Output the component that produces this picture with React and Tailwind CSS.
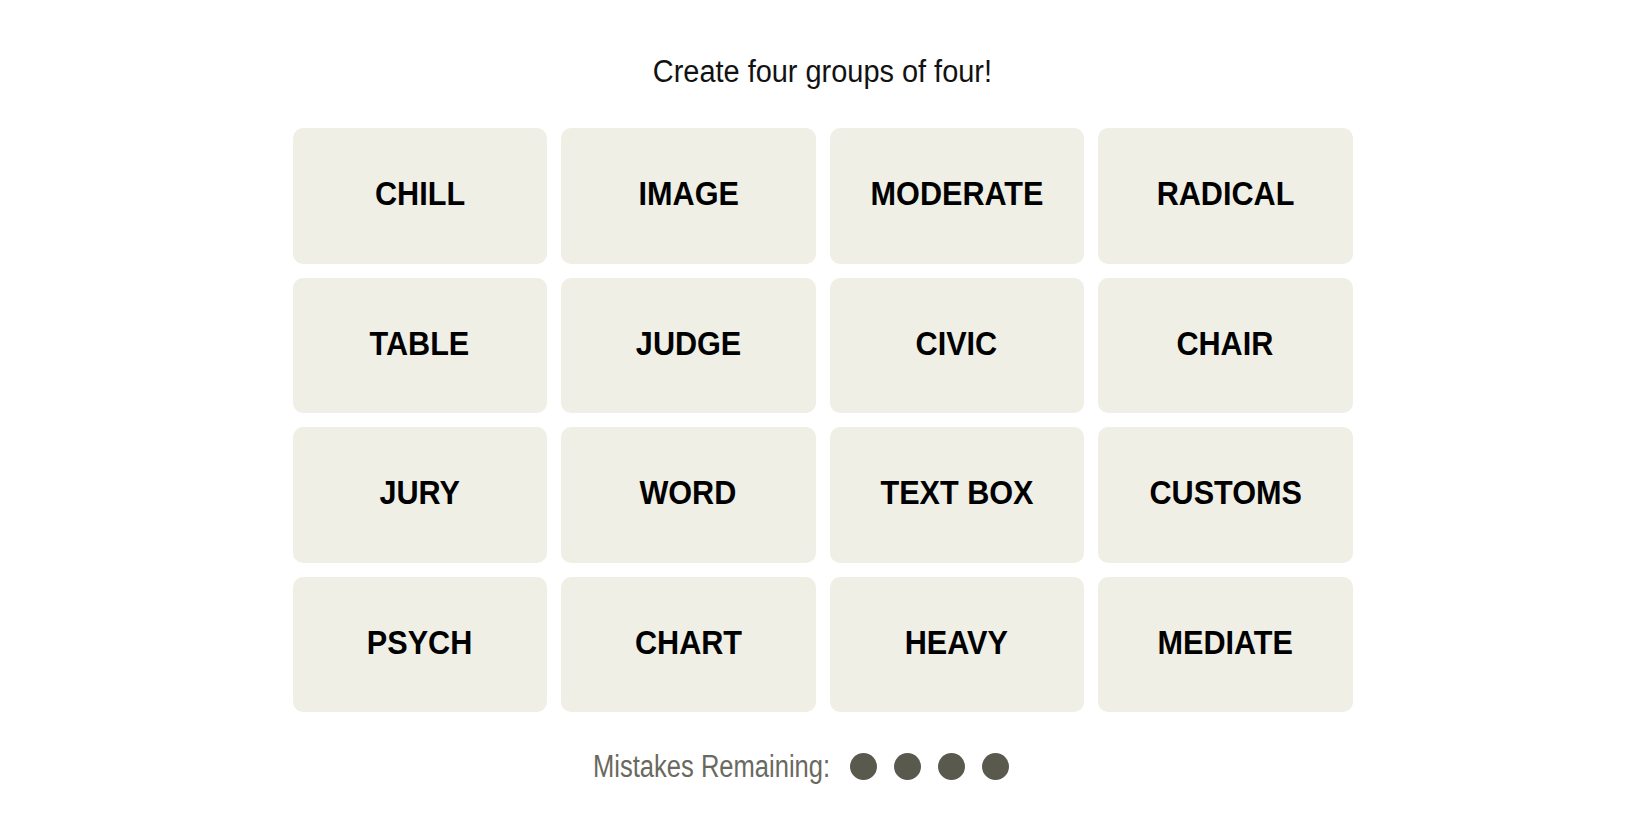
const words = [
  "CHILL", "IMAGE", "MODERATE", "RADICAL",
  "TABLE", "JUDGE", "CIVIC", "CHAIR",
  "JURY", "WORD", "TEXT BOX", "CUSTOMS",
  "PSYCH", "CHART", "HEAVY", "MEDIATE",
];

function Tile({ word }) {
  return (
    <button className="flex h-[135.5px] items-center justify-center rounded-[10px] bg-[#efefe6] pb-[5px]">
      <span className="inline-block scale-x-[0.9] whitespace-nowrap text-[34px] font-bold leading-none text-black">
        {word}
      </span>
    </button>
  );
}

export default function App() {
  return (
    <div className="min-h-screen bg-white pr-[5px] font-['Liberation_Sans',Arial,sans-serif] text-[#121212]">
      <div className="flex flex-col items-center pt-[51px]">
        <p className="inline-block scale-x-[0.945] whitespace-nowrap text-[30.6px] leading-[40px]">
          Create four groups of four!
        </p>

        <div className="mt-[37px] grid w-[1060px] grid-cols-4 gap-[14px]">
          {words.map((w) => (
            <Tile key={w} word={w} />
          ))}
        </div>

        <div className="mt-[34px] flex h-[40px] items-center pr-[43px]">
          <div className="w-[237px]">
            <span className="inline-block origin-left scale-x-[0.835] whitespace-nowrap text-[30.6px] leading-[40px] text-[#6a6960]">
              Mistakes Remaining:
            </span>
          </div>
          <div className="ml-[20px] flex gap-[17px]">
            <span className="h-[27px] w-[27px] rounded-full bg-[#5a594e]" />
            <span className="h-[27px] w-[27px] rounded-full bg-[#5a594e]" />
            <span className="h-[27px] w-[27px] rounded-full bg-[#5a594e]" />
            <span className="h-[27px] w-[27px] rounded-full bg-[#5a594e]" />
          </div>
        </div>
      </div>
    </div>
  );
}
